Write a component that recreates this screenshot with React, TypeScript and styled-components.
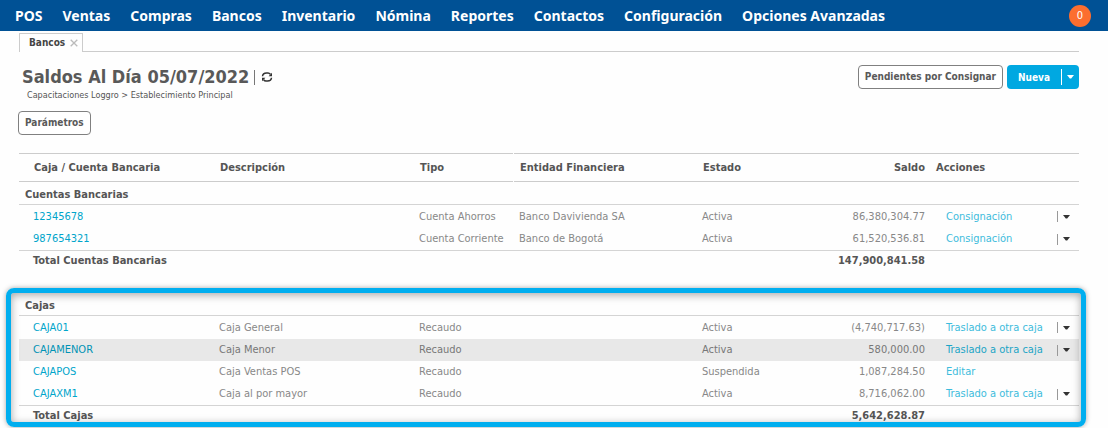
import React from "react";
import styled, { createGlobalStyle } from "styled-components";

const GlobalStyle = createGlobalStyle`
  * { box-sizing: border-box; }
  body {
    margin: 0;
    background: #fefefe;
    color: #555;
    font-family: "DejaVu Sans Condensed", "Noto Sans", sans-serif;
    font-size: 11px;
  }
  a { text-decoration: none; }
  button { font-family: inherit; cursor: pointer; }
`;

const TopBar = styled.header`
  display: flex;
  align-items: center;
  justify-content: space-between;
  height: 31px;
  padding: 0 17px 0 15px;
  background: #005195;
`;

const Menu = styled.nav`
  display: flex;
  gap: 20px;
`;

const MenuLink = styled.a`
  color: #fff;
  font: 700 14px/20px "Noto Sans", sans-serif;
  white-space: nowrap;
`;

const Counter = styled.button`
  width: 22px;
  height: 22px;
  padding: 0;
  border: 0;
  border-radius: 50%;
  background: #fc6e2f;
  color: #fff;
  font-size: 11px;
  line-height: 22px;
`;

const Page = styled.main`
  padding: 2px 29px 2px 19px;
`;

const TabStrip = styled.div`
  display: flex;
  height: 19px;
  border-bottom: 1px solid #ccc;
`;

const Tab = styled.div`
  display: flex;
  align-items: center;
  height: 19px;
  padding: 0 4px 0 9px;
  border: 1px solid #ccc;
  border-bottom: 0;
  background: #fefefe;
`;

const TabLink = styled.a`
  color: #444;
  font-size: 10px;
  font-weight: 700;
  line-height: 16px;
`;

const IconButton = styled.button`
  display: flex;
  padding: 0;
  border: 0;
  background: none;
  color: #333;
`;

const CloseButton = styled(IconButton)`
  margin-left: 5px;
  color: #bbb;
`;

const PageHeader = styled.div`
  display: flex;
  align-items: flex-start;
  justify-content: space-between;
  padding-top: 13px;
`;

const Heading = styled.div`
  padding-left: 3px;
`;

const TitleRow = styled.div`
  display: flex;
  align-items: center;
  height: 24px;
`;

const Title = styled.h1`
  margin: 0;
  color: #595959;
  font-size: 18px;
  line-height: 24px;
  white-space: nowrap;
`;

const Divider = styled.span<{ $tone?: string; $size?: number }>`
  width: 1px;
  height: ${(p) => p.$size ?? 11}px;
  background: ${(p) => p.$tone ?? "#999"};
`;

const TitleTools = styled.div`
  display: flex;
  align-items: center;
  gap: 6px;
  margin-left: 5px;
`;

const Breadcrumb = styled.div`
  padding-left: 5px;
  color: #555;
  font-size: 9px;
  line-height: 12px;
`;

const Actions = styled.div`
  display: flex;
  gap: 4px;
`;

const OutlineButton = styled.button`
  height: 24px;
  padding: 0 6px;
  border: 1px solid #808080;
  border-radius: 4px;
  background: #fff;
  color: #595959;
  font-size: 10px;
  font-weight: 700;
  line-height: 20px;
  white-space: nowrap;
`;

const SplitButton = styled.div`
  display: flex;
  align-items: center;
  height: 24px;
  border-radius: 4px;
  background: #00a8e1;
`;

const SplitMain = styled.button`
  width: 54px;
  height: 24px;
  padding: 0;
  border: 0;
  background: none;
  color: #fff;
  font-size: 10px;
  font-weight: 700;
`;

const SplitCaret = styled(IconButton)`
  padding: 8px 5px;
  color: #fff;
`;

const Filters = styled.div`
  display: flex;
  margin: 10px 0 18px -1px;
`;

const Table = styled.table`
  width: 100%;
  table-layout: fixed;
  border-collapse: separate;
  border-spacing: 0;
`;

const HeadCell = styled.th<{ $right?: boolean; $pad?: number }>`
  height: 29px;
  padding: 0 0 0 ${(p) => p.$pad ?? 15}px;
  border: solid #ccc;
  border-width: 1px 0;
  color: #555;
  font-size: 11px;
  line-height: 16px;
  text-align: ${(p) => (p.$right ? "right" : "left")};
  white-space: nowrap;
`;

const GapCell = styled.th`
  padding: 0;
`;

const GroupCell = styled.th`
  height: 23px;
  padding: 3px 0 0 6px;
  border-bottom: 1px solid #d4d4d4;
  color: #555;
  line-height: 16px;
  text-align: left;
`;

const Row = styled.tr<{ $active?: boolean }>`
  height: 22px;
  background: ${(p) => (p.$active ? "#e8e8e8" : "transparent")};
  color: ${(p) => (p.$active ? "#777" : "#888")};
  &:first-child { height: 23px; }
`;

const Cell = styled.td<{ $right?: boolean; $tight?: boolean }>`
  padding: 0 0 0 ${(p) => (p.$tight ? 5 : 14)}px;
  line-height: 16px;
  text-align: ${(p) => (p.$right ? "right" : "left")};
  white-space: nowrap;
`;

const TotalCell = styled.td<{ $right?: boolean }>`
  height: 21px;
  padding: 0 0 0 ${(p) => (p.$right ? 0 : 14)}px;
  border-top: 1px solid #d4d4d4;
  color: #555;
  font-weight: 700;
  line-height: 16px;
  text-align: ${(p) => (p.$right ? "right" : "left")};
`;

const AccountLink = styled.a<{ $active?: boolean }>`
  color: ${(p) => (p.$active ? "#0093b5" : "#00a5cb")};
`;

const RowActions = styled.div`
  display: flex;
  align-items: center;
  justify-content: space-between;
  padding: 0 9px 0 7px;
`;

const ActionLink = styled.a<{ $active?: boolean }>`
  color: ${(p) => (p.$active ? "#1ba5c6" : "#3dbcdc")};
`;

const MenuTools = styled.div`
  display: flex;
  align-items: center;
  gap: 5px;
`;

const CashSection = styled.section`
  position: relative;
  margin-top: 22px;
`;

const Highlight = styled.div`
  position: absolute;
  inset: -5px -7px -1px -13px;
  border: 5px solid #00aeef;
  border-radius: 8px;
  box-shadow: 0 0 5px rgba(0, 0, 0, 0.35), inset 0 2px 9px rgba(0, 0, 0, 0.35);
  pointer-events: none;
`;

const Caret = () => (
  <svg width="7" height="4" viewBox="0 0 7 4" aria-hidden="true">
    <path d="M0 0h7L4.2 3.6H2.8z" fill="currentColor" />
  </svg>
);

const CloseIcon = () => (
  <svg width="8" height="8" viewBox="0 0 8 8" aria-hidden="true">
    <path d="M.7.7l6.600 6.600M7.300.7L.7 7.300" stroke="currentColor" strokeWidth="1.3" />
  </svg>
);

const RefreshIcon = () => (
  <svg width="12" height="12" viewBox="0 0 12 12" aria-hidden="true">
    <g fill="none" stroke="currentColor" strokeWidth="1.5">
      <path d="M1.500 5.200C1.700 3 3.300 2 5.500 2H7c1 0 1.800.5 2.400 1.300" />
      <path d="M10.500 6.800C10.300 9 8.700 10 6.500 10H5c-1 0-1.800-.5-2.400-1.300" />
    </g>
    <path d="M11 1.800v3.400H7.600zM1 10.200V6.800h3.400z" fill="currentColor" />
  </svg>
);

const menu = ["POS", "Ventas", "Compras", "Bancos", "Inventario", "Nómina", "Reportes", "Contactos", "Configuración", "Opciones Avanzadas"];

type Account = {
  name: string;
  description?: string;
  type: string;
  bank?: string;
  state: string;
  balance: string;
  action: string;
  menu?: boolean;
  active?: boolean;
};

const banks: Account[] = [
  { name: "12345678", type: "Cuenta Ahorros", bank: "Banco Davivienda SA", state: "Activa", balance: "86,380,304.77", action: "Consignación", menu: true },
  { name: "987654321", type: "Cuenta Corriente", bank: "Banco de Bogotá", state: "Activa", balance: "61,520,536.81", action: "Consignación", menu: true },
];

const cashBoxes: Account[] = [
  { name: "CAJA01", description: "Caja General", type: "Recaudo", state: "Activa", balance: "(4,740,717.63)", action: "Traslado a otra caja", menu: true },
  { name: "CAJAMENOR", description: "Caja Menor", type: "Recaudo", state: "Activa", balance: "580,000.00", action: "Traslado a otra caja", menu: true, active: true },
  { name: "CAJAPOS", description: "Caja Ventas POS", type: "Recaudo", state: "Suspendida", balance: "1,087,284.50", action: "Editar" },
  { name: "CAJAXM1", description: "Caja al por mayor", type: "Recaudo", state: "Activa", balance: "8,716,062.00", action: "Traslado a otra caja", menu: true },
];

const Col = styled.col<{ $width?: number }>`
  width: ${(p) => (p.$width ? `${p.$width}px` : "auto")};
`;

const Columns = () => (
  <colgroup>
    <Col $width={186} />
    <Col $width={200} />
    <Col $width={108} />
    <Col $width={1} />
    <Col />
    <Col $width={110} />
    <Col $width={127} />
    <Col $width={154} />
  </colgroup>
);

function Group({ title, rows, totalLabel, total }: { title: string; rows: Account[]; totalLabel: string; total: string }) {
  return (
    <>
      <tbody>
        <tr>
          <GroupCell colSpan={8} scope="colgroup">{title}</GroupCell>
        </tr>
      </tbody>
      <tbody>
        {rows.map((r) => (
          <Row key={r.name} $active={r.active}>
            <Cell><AccountLink href="#" $active={r.active}>{r.name}</AccountLink></Cell>
            <Cell>{r.description}</Cell>
            <Cell>{r.type}</Cell>
            <Cell />
            <Cell $tight>{r.bank}</Cell>
            <Cell>{r.state}</Cell>
            <Cell $right>{r.balance}</Cell>
            <Cell>
              <RowActions>
                <ActionLink href="#" $active={r.active}>{r.action}</ActionLink>
                {r.menu && (
                  <MenuTools>
                    <Divider />
                    <IconButton aria-label={`Más acciones de ${r.name}`}><Caret /></IconButton>
                  </MenuTools>
                )}
              </RowActions>
            </Cell>
          </Row>
        ))}
      </tbody>
      <tfoot>
        <tr>
          <TotalCell colSpan={6}>{totalLabel}</TotalCell>
          <TotalCell $right>{total}</TotalCell>
          <TotalCell />
        </tr>
      </tfoot>
    </>
  );
}

export default function App() {
  return (
    <>
      <GlobalStyle />
      <TopBar>
        <Menu>
          {menu.map((item) => <MenuLink key={item} href="#">{item}</MenuLink>)}
        </Menu>
        <Counter>0</Counter>
      </TopBar>
      <Page>
        <TabStrip>
          <Tab>
            <TabLink href="#">Bancos</TabLink>
            <CloseButton aria-label="Cerrar"><CloseIcon /></CloseButton>
          </Tab>
        </TabStrip>
        <PageHeader>
          <Heading>
            <TitleRow>
              <Title>Saldos Al Día 05/07/2022</Title>
              <TitleTools>
                <Divider $size={15} $tone="#777" />
                <IconButton aria-label="Actualizar"><RefreshIcon /></IconButton>
              </TitleTools>
            </TitleRow>
            <Breadcrumb>Capacitaciones Loggro &gt; Establecimiento Principal</Breadcrumb>
          </Heading>
          <Actions>
            <OutlineButton>Pendientes por Consignar</OutlineButton>
            <SplitButton>
              <SplitMain>Nueva</SplitMain>
              <Divider $size={16} $tone="#fff" />
              <SplitCaret aria-label="Más opciones"><Caret /></SplitCaret>
            </SplitButton>
          </Actions>
        </PageHeader>
        <Filters>
          <OutlineButton>Parámetros</OutlineButton>
        </Filters>
        <Table>
          <Columns />
          <thead>
            <tr>
              <HeadCell>Caja / Cuenta Bancaria</HeadCell>
              <HeadCell>Descripción</HeadCell>
              <HeadCell>Tipo</HeadCell>
              <GapCell />
              <HeadCell $pad={6}>Entidad Financiera</HeadCell>
              <HeadCell>Estado</HeadCell>
              <HeadCell $right>Saldo</HeadCell>
              <HeadCell $pad={11}>Acciones</HeadCell>
            </tr>
          </thead>
          <Group title="Cuentas Bancarias" rows={banks} totalLabel="Total Cuentas Bancarias" total="147,900,841.58" />
        </Table>
        <CashSection>
          <Table>
            <Columns />
            <Group title="Cajas" rows={cashBoxes} totalLabel="Total Cajas" total="5,642,628.87" />
          </Table>
          <Highlight />
        </CashSection>
      </Page>
    </>
  );
}
